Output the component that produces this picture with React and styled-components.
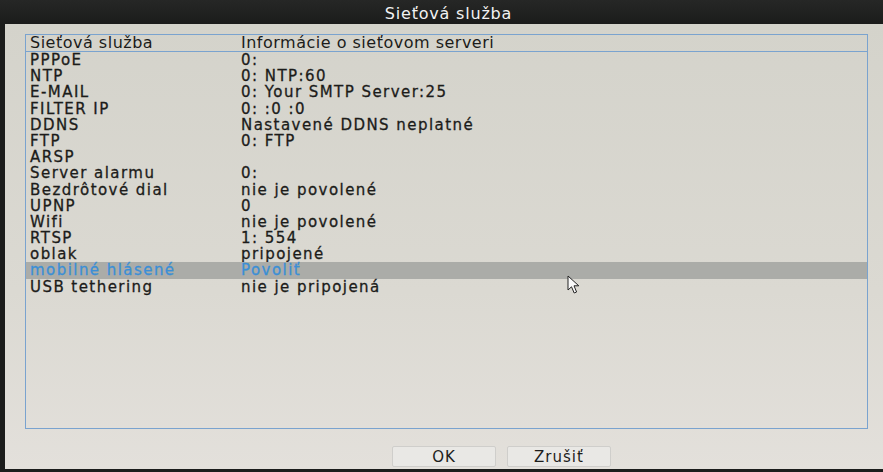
import React from 'react'
import styled, { createGlobalStyle } from 'styled-components'

const GlobalStyle = createGlobalStyle`
  html, body {
    margin: 0;
    padding: 0;
    background: #1b1c1b;
  }
  body {
    font-family: "DejaVu Sans", Verdana, sans-serif;
  }
`

const services = [
  { name: 'PPPoE', info: '0:' },
  { name: 'NTP', info: '0: NTP:60' },
  { name: 'E-MAIL', info: '0: Your SMTP Server:25' },
  { name: 'FILTER IP', info: '0: :0 :0' },
  { name: 'DDNS', info: 'Nastavené DDNS neplatné' },
  { name: 'FTP', info: '0: FTP' },
  { name: 'ARSP', info: '' },
  { name: 'Server alarmu', info: '0:' },
  { name: 'Bezdrôtové dial', info: 'nie je povolené' },
  { name: 'UPNP', info: '0' },
  { name: 'Wifi', info: 'nie je povolené' },
  { name: 'RTSP', info: '1: 554' },
  { name: 'oblak', info: 'pripojené' },
  { name: 'mobilné hlásené', info: 'Povoliť', selected: true },
  { name: 'USB tethering', info: 'nie je pripojená' },
]

export default function App() {
  return (
    <Screen>
      <GlobalStyle />
      <TitleBar>Sieťová služba</TitleBar>
      <Panel>
        <Table>
          <HeaderRow>
            <Cell>Sieťová služba</Cell>
            <Cell>Informácie o sieťovom serveri</Cell>
          </HeaderRow>
          {services.map((s, i) => (
            <Row key={i} $selected={s.selected}>
              <Cell>{s.name}</Cell>
              <Cell>{s.info}</Cell>
            </Row>
          ))}
        </Table>
        <Buttons>
          <Button>OK</Button>
          <Button>Zrušiť</Button>
        </Buttons>
      </Panel>
      <Cursor width="16" height="20" viewBox="0 0 16 20">
        <path d="M1 1 L1 15 L4.5 11.8 L7.2 18 L9.6 17 L7 10.8 L11.8 10.8 Z" fill="#fafafa" stroke="#222" strokeWidth="1" strokeLinejoin="round" />
      </Cursor>
    </Screen>
  )
}

const Screen = styled.div`
  position: relative;
  width: 883px;
  height: 472px;
  background: #1b1c1b;
  display: flex;
  flex-direction: column;
  overflow: hidden;
`

const TitleBar = styled.div`
  height: 24px;
  line-height: 27px;
  text-align: center;
  color: #f2f2f2;
  font-size: 16px;
  letter-spacing: 0.8px;
  padding-left: 14px;
  background: linear-gradient(#262726, #1b1c1b);
`

const Panel = styled.div`
  margin-left: 5px;
  height: 445px;
  background: linear-gradient(#d4d3cb, #dbd9d2 60%, #e3e0db);
  display: flex;
  flex-direction: column;
  padding: 10px 0 0 20px;
  box-sizing: border-box;
`

const Table = styled.div`
  width: 843px;
  height: 395px;
  border: 1px solid #7aa3cf;
  box-sizing: border-box;
  display: flex;
  flex-direction: column;
`

const Row = styled.div`
  display: grid;
  grid-template-columns: 211px 1fr;
  height: 16.2px;
  padding-left: 4px;
  font-size: 15px;
  line-height: 16px;
  letter-spacing: 1.45px;
  -webkit-text-stroke: 0.3px currentColor;
  color: ${p => (p.$selected ? '#3b8fd6' : '#1c1c1a')};
  background: ${p => (p.$selected ? '#abaca8' : 'transparent')};
  white-space: nowrap;
`

const HeaderRow = styled(Row)`
  height: 16px;
  border-bottom: 1px solid #7aa3cf;
  font-size: 16px;
  letter-spacing: 0.5px;
  -webkit-text-stroke: 0;
`

const Cell = styled.div``

const Buttons = styled.div`
  display: flex;
  justify-content: center;
  gap: 11px;
  margin-top: 17px;
  padding-left: 95px;
`

const Button = styled.div`
  width: 102px;
  height: 19px;
  line-height: 20px;
  text-align: center;
  font-size: 15px;
  letter-spacing: 1px;
  color: #1d1d1b;
  background: #e9e8e5;
  border: 1px solid #cfcecb;
  border-radius: 2px;
`

const Cursor = styled.svg`
  position: absolute;
  left: 567px;
  top: 275px;
`
